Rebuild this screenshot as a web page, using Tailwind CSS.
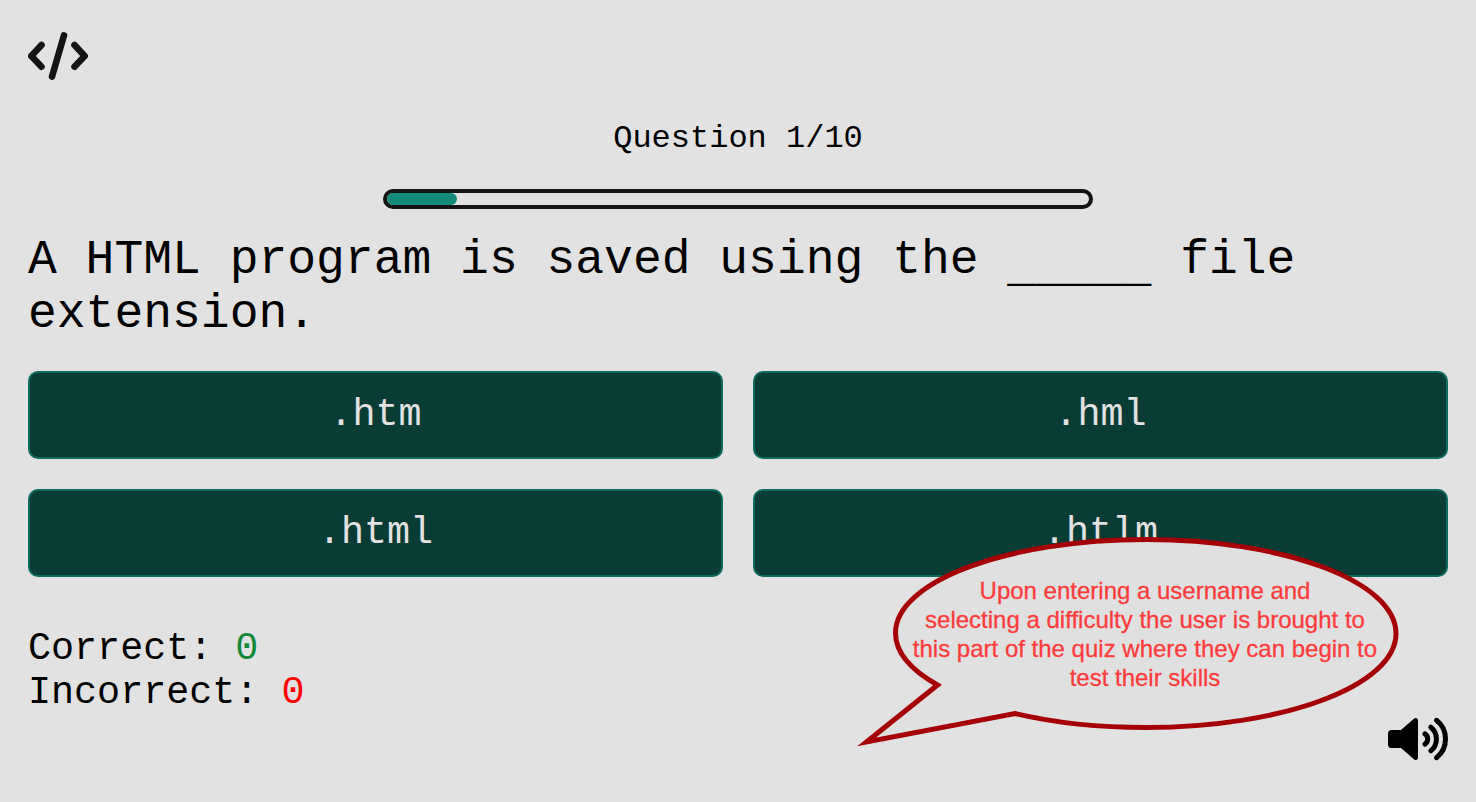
<!DOCTYPE html>
<html lang="en">
<head>
<meta charset="utf-8">
<title>Quiz</title>
<script src="https://cdn.jsdelivr.net/npm/@tailwindcss/browser@4"></script>
</head>
<body class="relative h-[802px] overflow-hidden bg-[#e2e2e2] px-7 pt-7 font-['Courier_New','Liberation_Mono',monospace] text-black">
  <header class="h-14">
    <svg class="h-14 w-16" viewBox="28 28 64 56" fill="none" stroke="#141414" stroke-width="6.600" stroke-linecap="round" stroke-linejoin="round">
      <path d="M41.500 45L31.300 56l10.200 10.700M74.500 45L84.700 56l-10.200 10.700M64 35.300L52 76.700"/>
    </svg>
  </header>
  <main>
    <p class="mt-[37px] text-center text-[32px] leading-9">Question 1/10</p>
    <div class="mx-auto mt-8 h-5 w-[710px] rounded-full border-4 border-[#141414]">
      <div class="h-full w-[10%] rounded-full bg-[#148b7a]"></div>
    </div>
    <h1 class="mt-6 text-[48px] leading-[54px]">A HTML program is saved using the <span class="relative top-2">_____</span> file extension.</h1>
    <div class="mt-[30px] grid grid-cols-2 gap-[30px] text-[38.4px] leading-[43px] text-[#e2e2e2]">
      <button class="h-22 rounded-[10px] border-2 border-[#0e6c5f] bg-[#093c35]">.htm</button>
      <button class="h-22 rounded-[10px] border-2 border-[#0e6c5f] bg-[#093c35]">.hml</button>
      <button class="h-22 rounded-[10px] border-2 border-[#0e6c5f] bg-[#093c35]">.html</button>
      <button class="h-22 rounded-[10px] border-2 border-[#0e6c5f] bg-[#093c35]">.htlm</button>
    </div>
    <div class="mt-[50px] text-[38.4px] leading-[44px]">
      <p>Correct: <span class="text-[#148a38]">0</span></p>
      <p>Incorrect: <span class="text-[#ff0000]">0</span></p>
    </div>
  </main>
  <svg class="absolute left-[1376px] top-[706px] h-16 w-[90px]" viewBox="0 0 90 64" fill="none" stroke="#000" stroke-width="5" stroke-linecap="round">
    <path fill="#000" stroke="none" d="M15.500 24H25L38.200 12.600Q39.500 11.800 40.700 12.200Q42 12.800 42 14.500V51.500Q42 53.200 40.700 53.800Q39.500 54.200 38.200 53.400L25 42H15.500Q12 42 12 38.500V27.500Q12 24 15.500 24Z"/>
    <path d="M49 27.900Q51.700 29.800 51.700 33T49 38.100M54.800 21.200Q60.400 25.600 60.400 33T54.800 44.800M60.500 14.300Q69.500 21.300 69.500 33T60.500 51.700"/>
  </svg>
  <div class="absolute left-[850px] top-[530px] h-[222px] w-[560px]">
    <svg class="absolute inset-0" width="560" height="222" viewBox="850 530 560 222">
      <path d="M937.500 685C911 670 895.500 652 895.500 633C895.500 581.500 1007.500 539.500 1145.800 539.500S1396 581.500 1396 633.500S1284 727.500 1145.800 727.500C1098 727.500 1053 722.500 1015 713.500L866.500 742Z" fill="#e0e0e0" stroke="#a60007" stroke-width="5" stroke-miterlimit="10"/>
    </svg>
    <p class="relative ml-[45px] w-[500px] pt-[46px] text-center font-['Liberation_Sans',sans-serif] text-[24px] leading-[29px] text-[#ff3b3b] [-webkit-text-stroke:0.3px_#ff3b3b]">Upon entering a username and<br>selecting a difficulty the user is brought to<br>this part of the quiz where they can begin to<br>test their skills</p>
  </div>
</body>
</html>
